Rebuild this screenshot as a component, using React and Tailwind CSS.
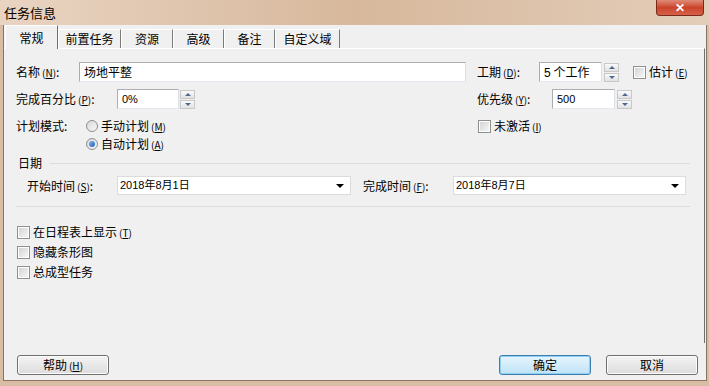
import React from "react";

const cjk = { fontFamily: '"Noto Sans CJK SC", "Noto Sans", sans-serif' };
const latin = { fontFamily: '"Liberation Sans", "Noto Sans CJK SC", sans-serif' };

function Key({ c }) {
  return (
    <span className="text-[10px] ml-[2px]">
      (<span className="underline">{c}</span>)
    </span>
  );
}

function Spinner() {
  return (
    <div className="flex flex-col gap-[1px] w-[15px] h-[19px]">
      <div className="flex-1 flex items-center justify-center border border-[#c8c8c8] bg-linear-to-b from-[#fafafa] to-[#e2e2e2]">
        <div className="w-0 h-0 border-l-[3px] border-r-[3px] border-b-[3px] border-l-transparent border-r-transparent border-b-[#4f6790]" />
      </div>
      <div className="flex-1 flex items-center justify-center border border-[#c8c8c8] bg-linear-to-b from-[#fafafa] to-[#e2e2e2]">
        <div className="w-0 h-0 border-l-[3px] border-r-[3px] border-t-[3px] border-l-transparent border-r-transparent border-t-[#4f6790]" />
      </div>
    </div>
  );
}

function Check({ label }) {
  return (
    <div className="flex items-center">
      <div className="w-[13px] h-[13px] border border-[#8e8f8f] bg-white p-[1px]">
        <div className="w-full h-full bg-linear-to-br from-[#d4d4d4] to-[#f6f6f6]" />
      </div>
      <span className="ml-[3px] leading-[14px]">{label}</span>
    </div>
  );
}

function Radio({ checked, label }) {
  return (
    <div className="flex items-center">
      <div className="w-[12px] h-[12px] rounded-full border border-[#8e8f8f] bg-linear-to-br from-[#d8d8d8] to-[#f8f8f8] flex items-center justify-center">
        {checked && <div className="w-[6px] h-[6px] rounded-full bg-linear-to-br from-[#7fb5f0] to-[#1f5fb8]" />}
      </div>
      <span className="ml-[3px] leading-[14px]">{label}</span>
    </div>
  );
}

function Input({ w, value }) {
  return (
    <div
      className={`${w} h-[20px] border border-[#abadb3] border-r-[#dbdfe6] border-b-[#e3e9ef] bg-white flex items-center px-[4px] text-[11px] overflow-hidden whitespace-nowrap`}
      style={latin}
    >
      {value}
    </div>
  );
}

function Combo({ w, value }) {
  return (
    <div
      className={`${w} h-[19px] border border-[#dcdcdc] bg-white flex items-center justify-between pl-[2px] pr-[6px] text-[11px]`}
      style={latin}
    >
      <span>{value}</span>
      <div className="w-0 h-0 border-l-[4px] border-r-[4px] border-t-[4px] border-l-transparent border-r-transparent border-t-black" />
    </div>
  );
}

function Tab({ w, label, active }) {
  return active ? (
    <div className={`${w} h-[24px] mb-[-1px] bg-[#f0f0f0] border-l border-t border-l-white border-t-white border-r border-r-[#6f6f6f] flex items-center justify-center relative z-10`}>
      {label}
    </div>
  ) : (
    <div className={`${w} h-[19px] bg-[#f0f0f0] border-t border-t-white border-l border-l-white border-r border-r-[#7a7a7a] flex items-center justify-center`}>
      {label}
    </div>
  );
}

function Button({ label, primary }) {
  return (
    <div
      className={`w-[92px] h-[20px] rounded-[3px] border flex items-center justify-center ${
        primary
          ? "border-[#3c7fb1] bg-linear-to-b from-[#e6f5fd] to-[#bfe3f6] shadow-[inset_0_0_0_1px_#8fd0f2]"
          : "border-[#707070] bg-linear-to-b from-[#f4f4f4] to-[#dcdcdc] shadow-[inset_0_0_0_1px_#fbfbfb]"
      }`}
    >
      {label}
    </div>
  );
}

export default function App() {
  return (
    <div className="w-[709px] h-[386px] flex flex-col overflow-hidden bg-[#d8bca4] text-[12px] text-black" style={cjk}>
      <div className="h-[25px] flex justify-between pl-[4px] pr-[5px] bg-linear-to-r from-[#e9d4c2] via-[#d7b89c] to-[#e3cdb9]">
        <span className="text-[13px] leading-[25px]">任务信息</span>
        <div className="w-[48px] h-[16px] rounded-b-[4px] border border-t-0 border-[#7a2a1a] bg-linear-to-b from-[#e08a76] via-[#c9442a] to-[#d7604a] flex items-center justify-center text-white font-bold text-[12px] leading-none" style={latin}>
          ✕
        </div>
      </div>

      <div className="ml-[3px] mr-[2px] mb-[5px] border-l border-r border-b border-[#8a7463] bg-[#f0f0f0] flex flex-col h-[356px]">
        <div className="h-[23px] flex items-end pl-[1px]">
          <Tab w="w-[53px]" label="常规" active />
          <Tab w="w-[63px]" label="前置任务" />
          <Tab w="w-[52px]" label="资源" />
          <Tab w="w-[51px]" label="高级" />
          <Tab w="w-[51px]" label="备注" />
          <Tab w="w-[65px]" label="自定义域" />
        </div>

        <div className="h-[295px] mr-[1px] border-t border-t-white border-r border-r-[#6f6f6f] flex flex-col pl-[12px]">
          <div className="mt-[13px] h-[20px] flex items-center">
            <div className="w-[461px] flex items-center">
              <span className="w-[63px]">名称<Key c="N" />:</span>
              <Input w="w-[387px]" value={<span style={cjk} className="text-[12px]">场地平整</span>} />
            </div>
            <span className="w-[62px]">工期<Key c="D" />:</span>
            <Input w="w-[63px]" value={<span className="text-[12px]" style={cjk}><span style={latin}>5</span>&nbsp;个工作</span>} />
            <div className="ml-[2px]"><Spinner /></div>
            <div className="ml-[14px]"><Check label={<>估计<Key c="E" /></>} /></div>
          </div>

          <div className="mt-[7px] h-[20px] flex items-center">
            <div className="w-[461px] flex items-center">
              <span className="w-[101px]">完成百分比<Key c="P" />:</span>
              <Input w="w-[62px]" value="0%" />
              <div className="ml-[1px]"><Spinner /></div>
            </div>
            <span className="w-[75px]">优先级<Key c="Y" />:</span>
            <Input w="w-[63px]" value="500" />
            <div className="ml-[2px]"><Spinner /></div>
          </div>

          <div className="mt-[8px] h-[18px] flex items-center">
            <div className="w-[462px] flex items-center">
              <span className="w-[70px]">计划模式:</span>
              <Radio label={<>手动计划<Key c="M" /></>} />
            </div>
            <Check label={<>未激活<Key c="I" /></>} />
          </div>

          <div className="h-[18px] flex items-center pl-[70px]">
            <Radio checked label={<>自动计划<Key c="A" /></>} />
          </div>

          <div className="mt-[2px] h-[16px] flex items-center pl-[2px] pr-[14px]">
            <span>日期</span>
            <div className="flex-1 ml-[8px] h-px bg-[#d8dde2]" />
          </div>

          <div className="mt-[5px] h-[19px] flex items-center pl-[11px]">
            <span className="w-[90px]">开始时间<Key c="S" />:</span>
            <Combo w="w-[234px]" value="2018年8月1日" />
            <span className="w-[90px] ml-[12px]">完成时间<Key c="F" />:</span>
            <Combo w="w-[233px]" value="2018年8月7日" />
          </div>

          <div className="mt-[11px] mr-[14px] h-px bg-[#d8dde2]" />

          <div className="mt-[15px] flex flex-col pl-[1px]">
            <div className="h-[20px] flex items-center"><Check label={<>在日程表上显示<Key c="T" /></>} /></div>
            <div className="h-[20px] flex items-center"><Check label="隐藏条形图" /></div>
            <div className="h-[20px] flex items-center"><Check label="总成型任务" /></div>
          </div>
        </div>

        <div className="mt-[12px] flex items-center pl-[13px] pr-[8px]">
          <Button label={<>帮助<Key c="H" /></>} />
          <div className="flex-1" />
          <Button label="确定" primary />
          <div className="ml-[15px]"><Button label="取消" /></div>
        </div>
      </div>
    </div>
  );
}
